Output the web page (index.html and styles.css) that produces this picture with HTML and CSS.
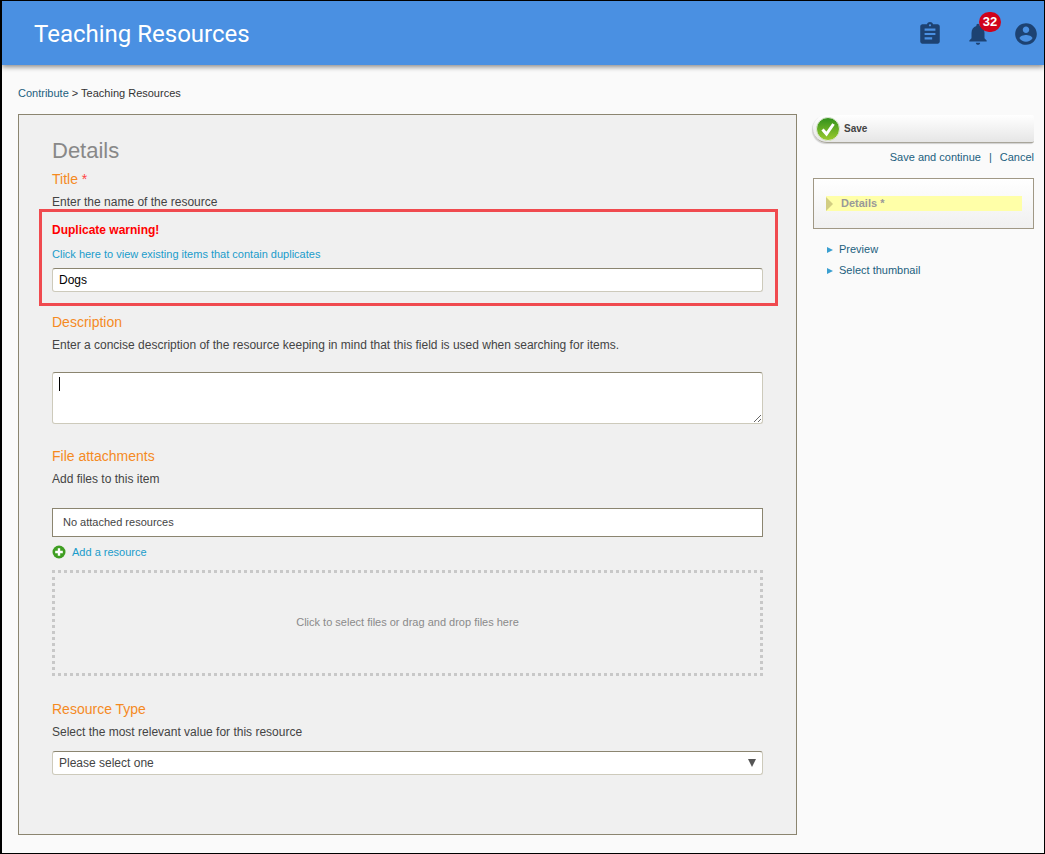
FILE: index.html
```html
<!DOCTYPE html>
<html lang="en">
<head>
    <meta charset="UTF-8">
    <title>Teaching Resources</title>
    <link rel="stylesheet" href="styles.css">
</head>
<body>
    <div class="frame">
        <header class="topbar">
            <div class="topbar-title">Teaching Resources</div>
            <div class="topbar-icons">
                <svg class="top-icon" width="26" height="26" viewBox="0 0 24 24"><path d="M19 3h-4.180C14.400 1.840 13.300 1 12 1s-2.400.84-2.820 2H5c-1.100 0-2 .9-2 2v14c0 1.100.9 2 2 2h14c1.100 0 2-.9 2-2V5c0-1.100-.9-2-2-2zm-7 0c.55 0 1 .45 1 1s-.45 1-1 1-1-.45-1-1 .45-1 1-1zm2 14H7v-2h7v2zm3-4H7v-2h10v2zm0-4H7V7h10v2z"/></svg>
                <div class="bell">
                    <svg class="top-icon" width="26" height="26" viewBox="0 0 24 24"><path d="M12 22c1.100 0 2-.9 2-2h-4c0 1.100.9 2 2 2zm6-6v-5c0-3.070-1.630-5.640-4.500-6.320V4c0-.83-.67-1.500-1.500-1.500s-1.500.67-1.500 1.500v.68C7.640 5.360 6 7.920 6 11v5l-2 2v1h16v-1l-2-2z"/></svg>
                    <span class="badge">32</span>
                </div>
                <svg class="top-icon" width="26" height="26" viewBox="0 0 24 24"><path d="M12 2C6.480 2 2 6.480 2 12s4.480 10 10 10 10-4.480 10-10S17.520 2 12 2zm0 3c1.660 0 3 1.340 3 3s-1.340 3-3 3-3-1.340-3-3 1.340-3 3-3zm0 14.200c-2.500 0-4.710-1.280-6-3.220.03-1.990 4-3.080 6-3.080 1.990 0 5.970 1.090 6 3.080-1.290 1.940-3.500 3.220-6 3.220z"/></svg>
            </div>
        </header>

        <div class="content">
            <div class="breadcrumb"><a href="#">Contribute</a> &gt; Teaching Resources</div>
            <div class="columns">
                <main class="panel">
                    <h2 class="panel-title">Details</h2>

                    <div class="field-label">Title <span class="req">*</span></div>
                    <div class="field-help">Enter the name of the resource</div>
                    <div class="dup-box">
                        <div class="dup-warning">Duplicate warning!</div>
                        <a class="link dup-link" href="#">Click here to view existing items that contain duplicates</a>
                        <input class="text-input" type="text" value="Dogs">
                    </div>

                    <div class="field-label desc-label">Description</div>
                    <div class="field-help">Enter a concise description of the resource keeping in mind that this field is used when searching for items.</div>
                    <div class="textarea-wrap">
                        <textarea class="text-area"></textarea>
                        <span class="caret"></span>
                    </div>

                    <div class="field-label files-label">File attachments</div>
                    <div class="field-help">Add files to this item</div>
                    <div class="attached">No attached resources</div>
                    <div class="add-row">
                        <svg width="14" height="14" viewBox="0 0 14 14"><circle cx="7" cy="7" r="6.500" fill="#3f9e22"/><path d="M7 3.200v7.600M3.200 7h7.600" stroke="#fff" stroke-width="2.400"/></svg>
                        <a class="link" href="#">Add a resource</a>
                    </div>
                    <div class="dropzone">Click to select files or drag and drop files here</div>

                    <div class="field-label type-label">Resource Type</div>
                    <div class="field-help">Select the most relevant value for this resource</div>
                    <div class="select-box">
                        <span>Please select one</span>
                        <span class="select-arrow"></span>
                    </div>
                </main>

                <aside class="sidebar">
                    <div class="save-btn">
                        <svg width="24" height="24" viewBox="0 0 24 24"><defs><linearGradient id="ok" x1="0" y1="0" x2="0" y2="1"><stop offset="0" stop-color="#2f8f1c"/><stop offset="1" stop-color="#9ccc2e"/></linearGradient></defs><circle cx="12" cy="12" r="11.500" fill="url(#ok)" stroke="#dfe8d5"/><path d="M6.500 12.500l4 4.500 7-10" fill="none" stroke="#fff" stroke-width="3"/></svg>
                        <span>Save</span>
                    </div>
                    <div class="save-links"><a href="#">Save and continue</a><span class="sep">|</span><a href="#">Cancel</a></div>
                    <div class="nav-box">
                        <div class="nav-current"><span class="nav-marker"></span>Details *</div>
                    </div>
                    <ul class="nav-list">
                        <li><a href="#">Preview</a></li>
                        <li><a href="#">Select thumbnail</a></li>
                    </ul>
                </aside>
            </div>
        </div>
    </div>
</body>
</html>
```

FILE: styles.css
```css
* {
    margin: 0;
    padding: 0;
    box-sizing: border-box;
}
html, body {
    width: 100%;
    height: 100%;
    overflow: hidden;
}
body {
    font-family: "Liberation Sans", Arial, sans-serif;
    font-size: 12px;
    color: #444;
    background-color: #fafafa;
}
a {
    color: #1c5f7e;
    text-decoration: none;
}
.frame {
    height: 854px;
    border: 1px solid #000;
    border-left-width: 2px;
    display: flex;
    flex-direction: column;
}
.topbar {
    height: 64px;
    flex-shrink: 0;
    background-color: #4a90e2;
    box-shadow: 0 2px 5px rgba(0, 0, 0, 0.45);
    display: flex;
    align-items: center;
    justify-content: space-between;
    padding: 2px 5px 0 32px;
}
.topbar-title {
    font-family: Roboto, sans-serif;
    font-size: 24px;
    color: #fff;
}
.topbar-icons {
    display: flex;
    align-items: center;
    gap: 22px;
}
.top-icon {
    display: block;
    fill: #1d4272;
}
.bell {
    position: relative;
}
.badge {
    position: absolute;
    top: -9px;
    left: 14px;
    width: 22px;
    height: 20px;
    border-radius: 10px;
    background-color: #d0021b;
    color: #fff;
    font-size: 13px;
    font-weight: bold;
    line-height: 20px;
    text-align: center;
}
.content {
    padding: 22px 10px 0 16px;
}
.breadcrumb {
    font-size: 11px;
    line-height: 13px;
    color: #333;
    margin-bottom: 14px;
}
.columns {
    display: flex;
    gap: 16px;
}
.panel {
    width: 779px;
    height: 721px;
    flex-shrink: 0;
    background-color: #f0f0f0;
    border: 1px solid #8b8570;
    padding: 23px 33px 0;
}
.panel-title {
    font-size: 22px;
    font-weight: normal;
    line-height: 26px;
    color: #888;
}
.field-label {
    font-size: 14px;
    line-height: 16px;
    color: #f58a1f;
    margin-top: 7px;
}
.req {
    color: #f44;
}
.field-help {
    line-height: 14px;
    margin-top: 8px;
}
.dup-box {
    margin: 0 -15px 0 -13px;
    height: 97px;
    border: 3px solid #f04a4f;
    padding: 11px 12px 0 10px;
}
.dup-warning {
    font-weight: bold;
    line-height: 14px;
    color: #f00;
}
.link {
    color: #1a9ccb;
    font-size: 11px;
}
.dup-link {
    display: block;
    line-height: 13px;
    margin-top: 11px;
    margin-bottom: 7px;
}
.text-input {
    display: block;
    width: 100%;
    height: 24px;
    border: 1px solid #cdcabb;
    border-top-color: #8b8570;
    border-radius: 3px;
    background-color: #fff;
    padding: 0 6px;
    font-family: "Liberation Sans", Arial, sans-serif;
    font-size: 12px;
    color: #000;
}
.desc-label {
    margin-top: 8px;
}
.textarea-wrap {
    position: relative;
    margin-top: 20px;
    height: 52px;
}
.text-area {
    display: block;
    width: 100%;
    height: 52px;
    border: 1px solid #cdcabb;
    border-top-color: #8b8570;
    border-radius: 3px;
    background-color: #fff;
}
.caret {
    position: absolute;
    left: 7px;
    top: 5px;
    width: 1px;
    height: 14px;
    background-color: #000;
}
.files-label {
    margin-top: 24px;
}
.attached {
    margin-top: 22px;
    height: 29px;
    border: 1px solid #8b8570;
    background-color: #fff;
    padding: 0 10px;
    font-size: 11px;
    line-height: 27px;
}
.add-row {
    display: flex;
    align-items: center;
    gap: 6px;
    margin-top: 8px;
    height: 14px;
}
.dropzone {
    margin-top: 11px;
    height: 106px;
    border: 3px dotted #c8c8c8;
    padding-bottom: 2px;
    font-size: 11px;
    color: #8a8a8a;
    display: flex;
    align-items: center;
    justify-content: center;
}
.type-label {
    margin-top: 25px;
}
.select-box {
    margin-top: 12px;
    height: 24px;
    border: 1px solid #cdcabb;
    border-top-color: #8b8570;
    border-radius: 3px;
    background-color: #fff;
    padding: 0 6px;
    display: flex;
    align-items: center;
    justify-content: space-between;
}
.select-arrow {
    width: 0;
    height: 0;
    border-left: 4px solid transparent;
    border-right: 4px solid transparent;
    border-top: 8px solid #555;
}
.sidebar {
    width: 221px;
}
.save-btn {
    height: 28px;
    margin-top: 1px;
    display: flex;
    align-items: center;
    gap: 4px;
    padding-left: 3px;
    border-radius: 14px 2px 2px 14px;
    background: linear-gradient(#fff, #e6e6e6);
    border-bottom: 1px solid #a8a59a;
    box-shadow: -1px 1px 1px #cfcfcf;
    font-size: 10px;
    font-weight: bold;
    color: #444;
}
.save-links {
    margin-top: 7px;
    font-size: 11px;
    line-height: 14px;
    text-align: right;
}
.sep {
    margin: 0 8px;
    color: #1c5f7e;
}
.nav-box {
    margin-top: 14px;
    height: 51px;
    border: 1px solid #a09885;
    background: linear-gradient(#fff, #f0f0f0);
    padding: 17px 11px 0 12px;
}
.nav-current {
    height: 15px;
    background-color: #ffffa8;
    font-size: 11px;
    font-weight: bold;
    line-height: 15px;
    color: #999;
    display: flex;
    align-items: center;
    gap: 8px;
}
.nav-marker {
    width: 0;
    height: 0;
    border-top: 7px solid transparent;
    border-bottom: 7px solid transparent;
    border-left: 7px solid #d2cd82;
}
.nav-list {
    list-style: none;
    margin-top: 14px;
    padding-left: 14px;
}
.nav-list li {
    font-size: 11px;
    line-height: 13px;
    margin-bottom: 8px;
    display: flex;
    align-items: center;
    gap: 6px;
}
.nav-list li::before {
    content: "";
    width: 0;
    height: 0;
    border-top: 3px solid transparent;
    border-bottom: 3px solid transparent;
    border-left: 6px solid #3a9fd0;
}
```
